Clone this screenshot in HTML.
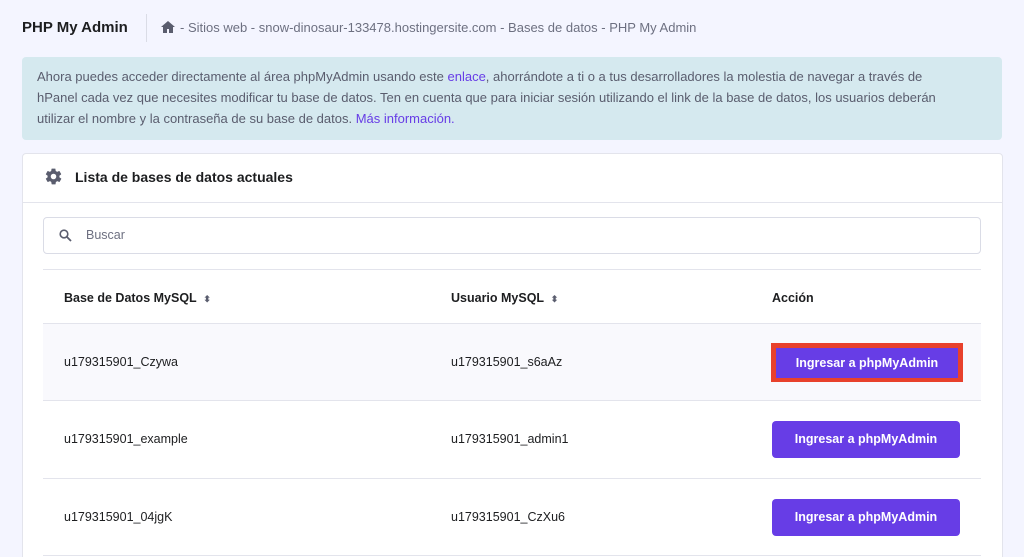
<!DOCTYPE html><html><head><style>
html,body{margin:0;width:1024px;height:557px;overflow:hidden}
body{background:#f4f5ff;font-family:"Liberation Sans",sans-serif;color:#2f1c6a;position:relative}
.a{position:absolute}
.bread{font-size:13px;color:#6d7081}
.info{left:22px;top:57px;width:980px;height:83px;background:#d5e9ef;border-radius:4px;font-size:13px;color:#5a5d6e;line-height:21px;box-sizing:border-box;padding:9px 15px;white-space:nowrap}
.info a{color:#673de6;text-decoration:none}
.card{left:22px;top:153px;width:979px;height:420px;background:#fff;border:1px solid #e3e4ec;border-radius:4px}
.th{font-size:12.5px;font-weight:bold;color:#1d1e20}
.td{font-size:12.5px;color:#1d1e20}
.btn{background:#673de6;color:#fff;font-weight:bold;font-size:12.5px;text-align:center;border-radius:4px;width:188px;height:37px;line-height:37px}
.line{height:1px;background:#e3e4ec;left:43px;width:938px}
</style></head><body>
<div class="a" style="left:22px;top:19px;font-size:15px;font-weight:bold;color:#1d1e20">PHP My Admin</div>
<div class="a" style="left:146px;top:14px;width:1px;height:28px;background:#dadce6"></div>
<svg class="a" style="left:161px;top:21px" width="14" height="12" viewBox="0 0 14 12"><path d="M7 0L0 6h2v6h4V8h2v4h4V6h2z" fill="#5a5d6e"/></svg>
<div class="a bread" style="left:180px;top:20px">- Sitios web - snow-dinosaur-133478.hostingersite.com - Bases de datos - PHP My Admin</div>
<div class="a info">Ahora puedes acceder directamente al área phpMyAdmin usando este <a>enlace</a>, ahorrándote a ti o a tus desarrolladores la molestia de navegar a través de<br>hPanel cada vez que necesites modificar tu base de datos. Ten en cuenta que para iniciar sesión utilizando el link de la base de datos, los usuarios deberán<br>utilizar el nombre y la contraseña de su base de datos. <a>Más información.</a></div>
<div class="a card"></div>
<svg class="a" style="left:44px;top:167px" width="19" height="19" viewBox="0 0 24 24"><path fill="#5a5d6e" d="M19.4 13c.04-.3.1-.7.1-1s-.03-.7-.1-1l2.1-1.6c.2-.15.25-.4.12-.64l-2-3.46c-.12-.22-.4-.3-.6-.22l-2.5 1c-.5-.4-1.100-.7-1.7-1l-.4-2.6C14.5 2.2 14.3 2 14 2h-4c-.3 0-.5.2-.5.4l-.4 2.7c-.6.2-1.100.6-1.700 1L5 5.1c-.2-.1-.5 0-.6.2l-2 3.5c-.1.2-.1.5.1.6L4.6 11c0 .3-.1.7-.1 1s0 .7.1 1l-2.1 1.6c-.2.2-.3.4-.1.6l2 3.5c.1.2.4.3.6.2l2.5-1c.5.4 1.1.7 1.7 1l.4 2.6c0 .3.2.5.5.5h4c.3 0 .5-.2.5-.4l.4-2.7c.6-.2 1.2-.6 1.7-1l2.5 1c.2.1.5 0 .6-.2l2-3.5c.1-.2.1-.5-.1-.6L19.4 13zM12 15.5a3.5 3.5 0 110-7 3.5 3.5 0 010 7z"/></svg>
<div class="a" style="left:75px;top:169px;font-size:14px;font-weight:bold;color:#1d1e20">Lista de bases de datos actuales</div>
<div class="a" style="left:22px;top:202px;width:980px;height:1px;background:#e3e4ec"></div>
<div class="a" style="left:43px;top:217px;width:936px;height:35px;border:1px solid #dadce6;border-radius:4px;background:#fff"></div>
<svg class="a" style="left:59px;top:229px" width="13" height="13" viewBox="0 0 13 13"><circle cx="5" cy="5" r="3.8" stroke="#5a5d6e" stroke-width="1.6" fill="none"/><path d="M8 8l4 4" stroke="#5a5d6e" stroke-width="1.8"/></svg>
<div class="a" style="left:86px;top:228px;font-size:12.5px;color:#6d7081">Buscar</div>
<div class="a line" style="top:269px"></div>
<div class="a th" style="left:64px;top:291px">Base de Datos MySQL &nbsp;<span style="font-size:9px;color:#5a5d6e">⬍</span></div>
<div class="a th" style="left:451px;top:291px">Usuario MySQL &nbsp;<span style="font-size:9px;color:#5a5d6e">⬍</span></div>
<div class="a th" style="left:772px;top:291px">Acción</div>
<div class="a line" style="top:323px"></div>
<div class="a" style="left:43px;top:324px;width:938px;height:76px;background:#f9f9fd"></div>
<div class="a line" style="top:400px"></div>
<div class="a line" style="top:478px"></div>
<div class="a line" style="top:555px"></div>
<div class="a td" style="left:64px;top:355px">u179315901_Czywa</div>
<div class="a td" style="left:451px;top:355px">u179315901_s6aAz</div>
<div class="a" style="left:771px;top:343px;width:192px;height:39px;background:#e8412c"></div>
<div class="a btn" style="left:776px;top:348px;width:182px;height:30px;line-height:30px;border-radius:0">Ingresar a phpMyAdmin</div>
<div class="a td" style="left:64px;top:432px">u179315901_example</div>
<div class="a td" style="left:451px;top:432px">u179315901_admin1</div>
<div class="a btn" style="left:772px;top:421px">Ingresar a phpMyAdmin</div>
<div class="a td" style="left:64px;top:510px">u179315901_04jgK</div>
<div class="a td" style="left:451px;top:510px">u179315901_CzXu6</div>
<div class="a btn" style="left:772px;top:499px">Ingresar a phpMyAdmin</div>
</body></html>
